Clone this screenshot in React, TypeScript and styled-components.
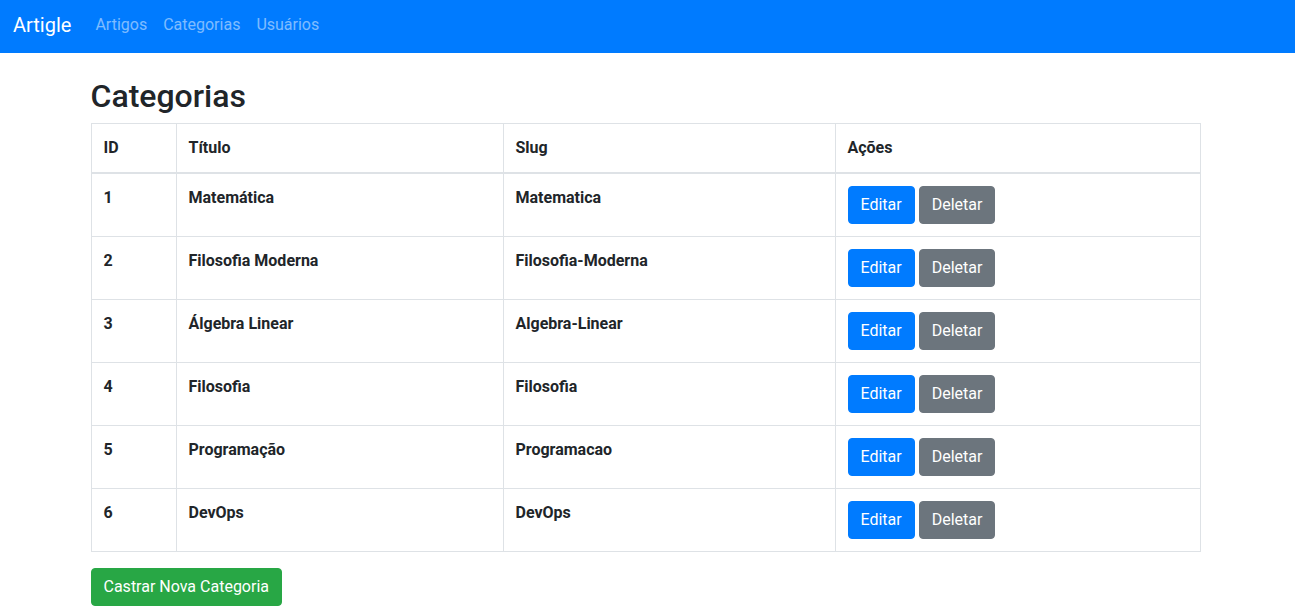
import React from 'react'
import styled, { createGlobalStyle } from 'styled-components'

const GlobalStyle = createGlobalStyle`
  * {
    box-sizing: border-box;
  }
  body {
    margin: 0;
    font-family: Roboto, "Liberation Sans", Arial, sans-serif;
    font-size: 16px;
    line-height: 1.5;
    color: #212529;
    background: #ffffff;
  }
`

const categories = [
  { id: 1, title: 'Matemática', slug: 'Matematica' },
  { id: 2, title: 'Filosofia Moderna', slug: 'Filosofia-Moderna' },
  { id: 3, title: 'Álgebra Linear', slug: 'Algebra-Linear' },
  { id: 4, title: 'Filosofia', slug: 'Filosofia' },
  { id: 5, title: 'Programação', slug: 'Programacao' },
  { id: 6, title: 'DevOps', slug: 'DevOps' },
]

const App = () => {
  return (
    <>
      <GlobalStyle />
      <Navbar>
        <Brand href="#">Artigle</Brand>
        <NavList>
          <NavItem href="#">Artigos</NavItem>
          <NavItem href="#">Categorias</NavItem>
          <NavItem href="#">Usuários</NavItem>
        </NavList>
      </Navbar>
      <Container>
        <Title>Categorias</Title>
        <Table>
          <colgroup>
            <col style={{ width: 85 }} />
            <col style={{ width: 327 }} />
            <col style={{ width: 332 }} />
            <col />
          </colgroup>
          <thead>
            <tr>
              <Th>ID</Th>
              <Th>Título</Th>
              <Th>Slug</Th>
              <Th>Ações</Th>
            </tr>
          </thead>
          <tbody>
            {categories.map((c) => (
              <tr key={c.id}>
                <Td>{c.id}</Td>
                <Td>{c.title}</Td>
                <Td>{c.slug}</Td>
                <Td>
                  <Actions>
                    <Button variant="primary">Editar</Button>
                    <Button variant="secondary">Deletar</Button>
                  </Actions>
                </Td>
              </tr>
            ))}
          </tbody>
        </Table>
        <Button variant="success">Castrar Nova Categoria</Button>
      </Container>
    </>
  )
}

const Navbar = styled.nav`
  height: 53px;
  background-color: #007bff;
  display: flex;
  align-items: flex-start;
  padding: 5px 13px 0;
`

const Brand = styled.a`
  font-size: 20px;
  line-height: 30px;
  padding: 5px 0;
  margin-right: 16px;
  color: #ffffff;
  text-decoration: none;
`

const NavList = styled.div`
  display: flex;
`

const NavItem = styled.a`
  padding: 8px;
  line-height: 24px;
  color: rgba(255, 255, 255, 0.5);
  text-decoration: none;
`

const Container = styled.main`
  width: 1140px;
  margin: 0 auto;
  padding: 24px 17px 0 13px;
`

const Title = styled.h2`
  margin: 0 0 8px;
  font-size: 32px;
  font-weight: 500;
  line-height: 1.2;
`

const Table = styled.table`
  width: 100%;
  border-collapse: collapse;
  margin-bottom: 16px;
  border: 1px solid #dee2e6;
`

const Th = styled.th`
  text-align: left;
  vertical-align: bottom;
  padding: 12px;
  font-weight: 700;
  border: 1px solid #dee2e6;
  border-bottom: 2px solid #dee2e6;
`

const Td = styled.td`
  vertical-align: top;
  padding: 12px;
  font-weight: 700;
  border: 1px solid #dee2e6;
`

const Actions = styled.div`
  display: flex;
  gap: 4px;
`

const colors = {
  primary: '#007bff',
  secondary: '#6c757d',
  success: '#28a745',
}

const Button = styled.button<{ variant: keyof typeof colors }>`
  font-family: inherit;
  font-size: 16px;
  line-height: 24px;
  font-weight: 400;
  padding: 6px 12px;
  border: 1px solid ${(p) => colors[p.variant]};
  border-radius: 4px;
  background-color: ${(p) => colors[p.variant]};
  color: #ffffff;
  cursor: pointer;
`

export default App
